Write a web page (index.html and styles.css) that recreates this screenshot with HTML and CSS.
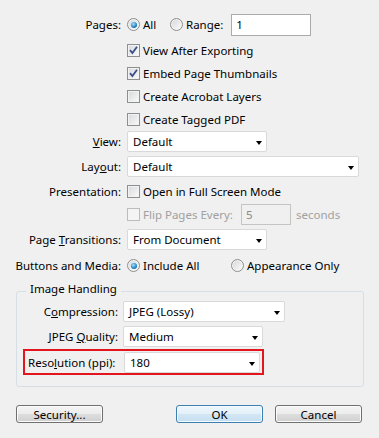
FILE: index.html
```html
<!DOCTYPE html>
<html lang="en">

<head>
    <meta charset="UTF-8">
    <title>Export Adobe PDF</title>
    <link rel="stylesheet" href="styles.css">
</head>

<body>
    <div class="dialog">
        <div class="row">
            <div class="lbl">Pages:</div>
            <span class="radio on"></span>
            <span class="opt opt-all">All</span>
            <span class="radio"></span>
            <span class="opt">Range:</span>
            <div class="textbox range-box">1</div>
        </div>

        <div class="row mt3">
            <div class="lbl"></div>
            <span class="chk on"><svg width="11" height="11" viewBox="0 0 11 11"><path d="M2 5.2 L4.4 8 L9 1.8" /></svg></span>
            <span class="opt">View After Exporting</span>
        </div>
        <div class="row">
            <div class="lbl"></div>
            <span class="chk on"><svg width="11" height="11" viewBox="0 0 11 11"><path d="M2 5.2 L4.4 8 L9 1.8" /></svg></span>
            <span class="opt">Embed Page Thumbnails</span>
        </div>
        <div class="row">
            <div class="lbl"></div>
            <span class="chk"></span>
            <span class="opt">Create Acrobat Layers</span>
        </div>
        <div class="row">
            <div class="lbl"></div>
            <span class="chk"></span>
            <span class="opt">Create Tagged PDF</span>
        </div>

        <div class="row mtn1">
            <div class="lbl"><u>V</u>iew:</div>
            <div class="sel w140"><span>Default</span><i class="arrow"></i></div>
        </div>
        <div class="row mt2">
            <div class="lbl">Lay<u>o</u>ut:</div>
            <div class="sel w232"><span>Default</span><i class="arrow"></i></div>
        </div>
        <div class="row mt2">
            <div class="lbl">Presentation:</div>
            <span class="chk"></span>
            <span class="opt">Open in Full Screen Mode</span>
        </div>
        <div class="row">
            <div class="lbl"></div>
            <span class="chk off"></span>
            <span class="opt dim flip-text">Flip Pages Every:</span>
            <div class="textbox flip-box">5</div>
            <span class="opt dim">seconds</span>
        </div>
        <div class="row mt2">
            <div class="lbl">Page <u>T</u>ransitions:</div>
            <div class="sel w140"><span>From Document</span><i class="arrow"></i></div>
        </div>
        <div class="row mt3">
            <div class="lbl">Buttons and Media:</div>
            <span class="radio on"></span>
            <span class="opt opt-include">Include All</span>
            <span class="radio"></span>
            <span class="opt">Appearance Only</span>
        </div>

        <fieldset class="group">
            <legend>Image Handling</legend>
            <div class="grow">
                <div class="glbl">C<u>o</u>mpression:</div>
                <div class="sel w162"><span>JPEG (Lossy)</span><i class="arrow"></i></div>
            </div>
            <div class="grow mt2">
                <div class="glbl">JPEG <u>Q</u>uality:</div>
                <div class="sel w140"><span>Medium</span><i class="arrow"></i></div>
            </div>
            <div class="hl">
                <div class="hl-lbl">Reso<u>l</u>ution (ppi):</div>
                <div class="sel w136"><span>180</span><i class="arrow"></i></div>
            </div>
        </fieldset>

        <div class="buttons">
            <div class="btn">Security...</div>
            <div class="btn default">OK</div>
            <div class="btn">Cancel</div>
        </div>
    </div>
</body>

</html>
```

FILE: styles.css
```css
body {
    margin: 0;
    background-color: #f0f0f0;
    font-family: "Noto Sans", "DejaVu Sans", sans-serif;
    font-size: 11.5px;
    color: #000;
}

.dialog {
    width: 379px;
    height: 438px;
    padding-top: 13px;
    box-sizing: border-box;
}

.row {
    display: flex;
    align-items: center;
    height: 23px;
}

.mt2 {
    margin-top: 2px;
}

.mt3 {
    margin-top: 3px;
}

.mtn1 {
    margin-top: -1px;
}

.lbl {
    width: 121px;
    margin-right: 6px;
    text-align: right;
    white-space: nowrap;
    flex: none;
}

.opt {
    margin-left: 3px;
    white-space: nowrap;
}

.opt-all {
    width: 27px;
}

.opt-include {
    width: 88px;
}

.dim {
    color: #a0a0a0;
}

.flip-text {
    width: 98px;
}

/* checkboxes and radios */

.chk {
    width: 13px;
    height: 13px;
    box-sizing: border-box;
    border: 1px solid #8e8f8f;
    background: linear-gradient(135deg, #d6d8db, #fbfbfb);
    box-shadow: inset 0 0 0 1px #f2f2f2;
    flex: none;
}

.chk svg {
    display: block;
}

.chk path {
    fill: none;
    stroke: #3b4f86;
    stroke-width: 1.8;
}

.chk.off {
    border-color: #bcbcbc;
    background: #f4f4f4;
    box-shadow: none;
}

.radio {
    width: 13px;
    height: 13px;
    box-sizing: border-box;
    border: 1px solid #8e8f8f;
    border-radius: 50%;
    background: linear-gradient(135deg, #d4d6d9, #fdfdfd);
    box-shadow: inset 0 0 0 1px #f4f4f4;
    display: flex;
    align-items: center;
    justify-content: center;
    flex: none;
}

.radio.on::after {
    content: "";
    width: 6px;
    height: 6px;
    border-radius: 50%;
    background: radial-gradient(circle at 40% 35%, #a6e3ff, #2a86c8 55%, #0c4f86);
}

/* text fields and dropdowns */

.textbox {
    height: 22px;
    box-sizing: border-box;
    border: 1px solid #ababab;
    background-color: #fff;
    padding-left: 4px;
    line-height: 20px;
}

.range-box {
    width: 80px;
    margin-left: 8px;
}

.flip-box {
    width: 50px;
    height: 21px;
    line-height: 19px;
    margin-right: 2px;
    border-color: #c4c4c4;
    background-color: #f0f0f0;
    color: #8a8a8a;
}

.sel {
    height: 21px;
    box-sizing: border-box;
    border: 1px solid #d9d9d9;
    border-radius: 2px;
    background-color: #fff;
    display: flex;
    align-items: center;
    padding-left: 5px;
    flex: none;
}

.arrow {
    margin-left: auto;
    margin-right: 4px;
    margin-top: 2px;
    width: 0;
    height: 0;
    border-top: 4px solid #000;
    border-left: 3.5px solid transparent;
    border-right: 3.5px solid transparent;
}

.w136 {
    width: 136px;
}

.w140 {
    width: 140px;
}

.w162 {
    width: 162px;
}

.w232 {
    width: 232px;
}

/* image handling group */

.group {
    margin: 5px 0 0 16px;
    padding: 0 0 11px 0;
    width: 348px;
    box-sizing: border-box;
    border: 1px solid #d5dfe5;
    border-radius: 3px;
    min-inline-size: 0;
}

.group legend {
    margin-left: 9px;
    padding: 0 4px 4px 4px;
    line-height: 14px;
}

.grow {
    display: flex;
    align-items: center;
    height: 23px;
}

.glbl {
    width: 101px;
    margin-right: 5px;
    text-align: right;
    white-space: nowrap;
}

.hl {
    display: flex;
    align-items: flex-start;
    width: 241px;
    margin: 1px 0 0 6px;
    box-sizing: border-box;
    border: 2px solid #e3151e;
    padding: 1px 2px 0 3px;
}

.hl-lbl {
    width: 90px;
    margin-right: 6px;
    line-height: 21px;
    white-space: nowrap;
}

/* bottom buttons */

.buttons {
    display: flex;
    gap: 12px;
    padding: 0 17px 0 16px;
    margin-top: 18px;
}

.btn {
    width: 87px;
    height: 18px;
    box-sizing: border-box;
    border: 1px solid #707070;
    border-radius: 3px;
    background: linear-gradient(#f4f4f4 0%, #ececec 50%, #dedede 50%, #d0d0d0 100%);
    box-shadow: inset 0 0 0 1px #fbfbfb;
    display: flex;
    align-items: center;
    justify-content: center;
}

.btn:first-child {
    margin-right: auto;
}

.btn.default {
    border-color: #3c7fb1;
    background: linear-gradient(#edf6fc 0%, #e3f0f9 50%, #d3e7f5 50%, #c4dff1 100%);
    box-shadow: inset 0 0 0 1px #f4fafe;
}
```
